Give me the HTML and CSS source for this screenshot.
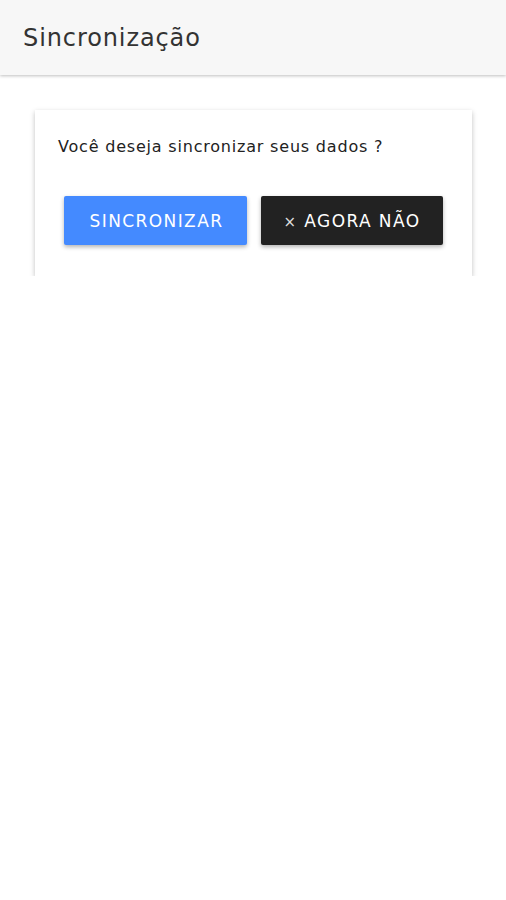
FILE: index.html
```html
<!DOCTYPE html>
<html>

<head>
    <meta charset="utf-8">
    <title>Sincronização</title>
    <link rel="stylesheet" href="styles.css">
</head>

<body>
    <header class="topo">
        <h1>Sincronização</h1>
    </header>

    <main class="conteudo">
        <div class="cartao">
            <p class="pergunta">Você deseja sincronizar seus dados ?</p>
            <div class="acoes">
                <button class="btn btn-azul">SINCRONIZAR</button>
                <button class="btn btn-escuro"><span class="fechar">×</span> AGORA NÃO</button>
            </div>
        </div>
    </main>
</body>

</html>
```

FILE: styles.css
```css
/* reset basico */
body {
    margin: 0;
    background-color: #fff;
    font-family: "DejaVu Sans", sans-serif;
    color: #222;
}

/* barra superior */
.topo {
    height: 75px;
    background-color: #f7f7f7;
    box-shadow: 0 1px 3px rgba(0, 0, 0, .25);
    display: flex;
    align-items: center;
    padding-left: 23px;
}
.topo h1 {
    margin: 0;
    font-family: "DejaVu Sans", sans-serif;
    font-weight: 400;
    font-size: 24px;
    letter-spacing: .9px;
    color: #333;
}

/* area do cartao */
.conteudo {
    padding: 35px 34px 0 35px;
}
.cartao {
    background-color: #fff;
    box-shadow: 0 2px 5px rgba(0, 0, 0, .25);
    padding: 24px 23px 31px;
}
.pergunta {
    margin: 0;
    font-size: 16px;
    letter-spacing: .8px;
    line-height: 26px;
}

/* botoes */
.acoes {
    display: flex;
    gap: 14px;
    padding-left: 6px;
    margin-top: 36px;
}
.btn {
    width: 183px;
    height: 49px;
    border: 0;
    border-radius: 2px;
    font-family: "DejaVu Sans", sans-serif;
    font-size: 17px;
    letter-spacing: 1.4px;
    color: #fff;
    box-shadow: 0 2px 4px rgba(0, 0, 0, .3);
}
.btn-azul {
    background-color: #448aff;
    padding-left: 8px;
}
.btn-escuro {
    width: 182px;
    background-color: #222;
}
.fechar {
    font-size: 15px;
    color: #ddd;
}
```
